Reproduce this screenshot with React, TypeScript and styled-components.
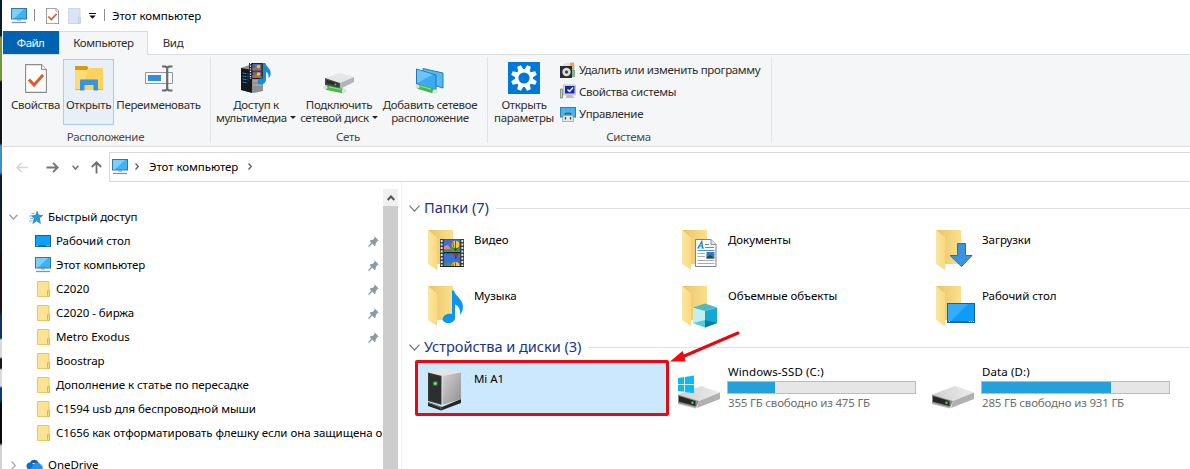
import React from 'react';
import styled, { createGlobalStyle } from 'styled-components';

const Global = createGlobalStyle`
  * { box-sizing: border-box; }
  body { margin: 0; background: #fff; overflow: hidden; }
  svg { display: block; flex: none; }
`;

/* ---------- frame ---------- */
const Screen = styled.div`
  display: flex;
  width: 1190px;
  height: 469px;
  overflow: hidden;
  font: 11.5px/16px "Noto Sans", "Open Sans", sans-serif;
  letter-spacing: -0.06px;
  color: #000;
  white-space: nowrap;
`;
const DesktopEdge = styled.div`
  flex: none;
  width: 2px;
  background: linear-gradient(#0b1a33 0 36px, #6f9a3a 37px 80px, #101418 82px 143px, #3f8fc0 146px 172px,
    #0c1a35 176px 250px, #1a1216 256px 310px, #12335e 316px 338px, #d8dade 340px 357px, #15151a 359px 368px,
    #d8dade 370px 386px, #0f3a6e 388px 400px, #07090c 404px 443px, #d2d4d6 446px);
`;
const Window = styled.div`
  position: relative;
  flex: 1;
  min-width: 0;
  display: flex;
  flex-direction: column;
  background: #fff;
  padding-left: 1px;
`;

/* ---------- title bar ---------- */
const TitleBar = styled.header`
  display: flex;
  align-items: center;
  height: 31px;
  padding-left: 8px;
`;
const TitleDivider = styled.i<{ $l: number; $r: number }>`
  width: 1px;
  height: 12px;
  margin: 0 ${p => p.$r}px 2px ${p => p.$l}px;
  background: #8c8c8c;
`;
const QuickIcon = styled.span<{ $r: number }>`
  margin-right: ${p => p.$r}px;
`;
const Title = styled.span`
  padding-top: 1px;
`;

/* ---------- tabs ---------- */
const Tabs = styled.nav`
  display: flex;
  height: 24px;
  letter-spacing: -0.33px;
  border-bottom: 1px solid #dadbdc;
`;
const FileTab = styled.div`
  width: 56px;
  height: 23px;
  padding-right: 1px;
  line-height: 24px;
  text-align: center;
  letter-spacing: -0.6px;
  color: #fff;
  background: #0063b1;
`;
const ActiveTab = styled.div`
  width: 89px;
  height: 24px;
  line-height: 22px;
  text-align: center;
  color: #2b2b2b;
  background: #f5f6f7;
  border: solid #dadbdc;
  border-width: 1px 1px 0;
`;
const Tab = styled.div`
  width: 50px;
  line-height: 24px;
  text-align: center;
  color: #2b2b2b;
`;

/* ---------- ribbon ---------- */
const Ribbon = styled.section`
  display: flex;
  height: 92px;
  background: #f5f6f7;
  border-bottom: 1px solid #dadbdc;
  color: #2f2f2f;
  letter-spacing: -0.33px;
`;
const Group = styled.div<{ $w: number }>`
  display: flex;
  flex-direction: column;
  width: ${p => p.$w}px;
  height: 86px;
  margin-top: 2px;
  border-right: 1px solid #e2e3e4;
`;
const GroupBody = styled.div<{ $pad: number }>`
  display: flex;
  flex: none;
  height: 71px;
  padding: 2px 0 0 ${p => p.$pad}px;
`;
const GroupLabel = styled.div`
  padding-right: 2px;
  line-height: 18px;
  text-align: center;
  color: #4a4a4a;
`;
const BigButton = styled.button<{ $w: number; $hot?: boolean; $gap?: number }>`
  display: flex;
  flex-direction: column;
  align-items: center;
  width: ${p => p.$w}px;
  height: 66px;
  margin: 0 0 0 ${p => p.$gap || 0}px;
  padding: 2px 0 0;
  font: inherit;
  line-height: 13px;
  letter-spacing: inherit;
  color: inherit;
  border: 1px solid ${p => (p.$hot ? '#a6cbee' : 'transparent')};
  background: ${p => (p.$hot ? '#e8eff7' : 'transparent')};
`;
const IconBox = styled.span`
  display: grid;
  place-items: center;
  height: 32px;
`;
const ButtonText = styled.span`
  margin-top: 4px;
  text-align: center;
`;
const Caret = styled.i`
  display: inline-block;
  margin: 0 0 3px 3px;
  border: solid transparent;
  border-width: 3px 3px 0;
  border-top-color: #222;
`;
const SmallList = styled.div`
  display: flex;
  flex-direction: column;
  margin-left: 4px;
`;
const SmallItem = styled.div`
  display: flex;
  align-items: center;
  gap: 3px;
  height: 22px;
`;

/* ---------- address row ---------- */
const NavRow = styled.div`
  display: flex;
  align-items: center;
  height: 35px;
  padding-left: 13px;
`;
const NavIcon = styled.span<{ $r: number }>`
  margin: 5px ${p => p.$r}px 0 0;
`;
const Address = styled.div`
  display: flex;
  align-items: center;
  flex: 1;
  height: 30px;
  margin-top: 4px;
  padding-left: 2px;
  border: 1px solid #d9d9d9;
  border-right: 0;
`;
const Crumb = styled.span`
  margin: 0 10px 0 7px;
`;
const CrumbText = styled.span`
  margin-right: 3px;
`;

/* ---------- body ---------- */
const Body = styled.div`
  display: flex;
  flex: 1;
  min-height: 0;
`;
const Sidebar = styled.aside`
  width: 380px;
  padding-top: 23px;
  overflow: hidden;
`;
const TreeRow = styled.div`
  display: flex;
  align-items: center;
  height: 24px;
  padding: 0 4px 0 32px;
  gap: 5px;
`;
const QuickHead = styled(TreeRow)`
  padding-left: 6px;
  gap: 11px;
`;
const CloudHead = styled(TreeRow)`
  margin-top: 8px;
  padding-left: 8px;
`;
const TreeLabel = styled.span`
  flex: 1;
`;
const HeadLabel = styled(TreeLabel)`
  margin-left: -6px;
`;
const CloudSlot = styled.span`
  margin-left: 5px;
`;
const Scroll = styled.div`
  display: flex;
  flex-direction: column;
  width: 15px;
  margin-top: 7px;
  background: #cdcdcd;
`;
const ScrollUp = styled.div`
  display: grid;
  place-items: center;
  height: 17px;
  background: #f0f0f0;
`;
const Main = styled.main`
  flex: 1;
  min-width: 0;
  margin-left: 3px;
  border-left: 1px solid #f0f0f0;
  padding: 14px 0 0 7px;
`;
const SectionHead = styled.div`
  display: flex;
  align-items: center;
  height: 24px;
  font-size: 14.6px;
  letter-spacing: -0.05px;
  color: #1e3287;
`;
const SectionTitle = styled.span`
  margin: -2px 7px 0 4px;
`;
const Rule = styled.i`
  flex: 1;
  height: 1px;
  background: #e0e0e0;
`;
const Tiles = styled.div`
  display: grid;
  grid-template-columns: repeat(3, 254px);
  grid-auto-rows: 56px;
  padding-left: 7px;
`;
const FolderGrid = styled(Tiles)`
  height: 115px;
  padding-top: 2px;
`;
const DriveGrid = styled(Tiles)`
  padding-top: 2px;
`;
const Tile = styled.div`
  display: flex;
  padding: 7px 0 0 11px;
`;
const TileLabel = styled.span`
  margin: 3px 0 0 6px;
`;
const Selected = styled.div`
  display: flex;
  width: 254px;
  height: 56px;
  margin: -1px 0 0 -1px;
  padding: 4px 0 0 9px;
  border: 3px solid #e30b13;
  border-radius: 2px;
  background: #cce8ff;
`;
const SelectedLabel = styled.span`
  margin: 4px 0 0 7px;
`;
const Drive = styled.div`
  display: flex;
  padding: 3px 0 0 7px;
`;
const DriveInfo = styled.div`
  width: 189px;
  margin-left: 4px;
  line-height: 15px;
`;
const DriveName = styled.div`
  padding-left: 1px;
  letter-spacing: 0.1px;
`;
const Meter = styled.div`
  height: 13px;
  margin: 2px 0 1px;
  border: 1px solid #bcbcbc;
  background: #e6e6e6;
`;
const MeterFill = styled.div<{ $pct: number }>`
  width: ${p => p.$pct}%;
  height: 100%;
  background: #26a0da;
`;
const DriveFree = styled.div`
  padding-left: 1px;
  color: #6d6d6d;
  letter-spacing: -0.18px;
`;
const Pointer = styled.svg`
  position: absolute;
  left: 666px;
  top: 328px;
`;

/* ---------- icons ---------- */
const PcIcon = () => (
  <svg width="16" height="16" viewBox="0 0 16 16">
    <rect x=".5" y=".5" width="15" height="10.5" fill="#3db3f5" stroke="#3177a0" />
    <path d="M1 1h12L3 10.500H1z" fill="#7dcffb" />
    <path d="M6 12h4" stroke="#5c9ab8" />
    <path d="M1 14.500h14" stroke="#7e93a5" strokeWidth="1.300" />
  </svg>
);
const CheckDoc = ({ big }: { big?: boolean }) => (
  <svg width={big ? 22 : 13} height={big ? 29 : 16} viewBox="0 0 22 29" preserveAspectRatio="none">
    <path d="M.6.600h16l4.800 5v22.800H.6z" fill="#fff" stroke="#8b8b8b" strokeWidth={big ? 1.1 : 1.7} />
    <path d="M16.500.600v5h5" fill="#eee" stroke="#8b8b8b" />
    <path d="M4 15.500l5 5.500 9-10" fill="none" stroke="#e0592a" strokeWidth="3" />
  </svg>
);
const BlankDoc = () => (
  <svg width="13" height="16" viewBox="0 0 13 16">
    <path d="M.5.500h11.500v15H.5z" fill="#dbe4f4" stroke="#ccd8ea" />
    <path d="M10.500 9.500h2v6h-2z" fill="#d3def0" stroke="#c3d0e6" />
  </svg>
);
const Overflow = () => (
  <svg width="7" height="6" viewBox="0 0 7 6">
    <path d="M0 .500h7" stroke="#111" />
    <path d="M.3 2.500h6.400L3.500 5.800z" fill="#111" />
  </svg>
);
const OpenFolder = () => (
  <svg width="28" height="25" viewBox="0 0 28 25">
    <path d="M0 24V3.500h13l2-1.500h13v22z" fill="#fbd45f" />
    <path d="M0 4h12L8 24H0z" fill="#fde08a" opacity=".6" />
    <path d="M0 4V0h12l1.500 2-1.500 2z" fill="#d69c0c" />
    <path d="M5 24.500V15q0-2 2-2h14q2 0 2 2v9.500h-4.500V19h-9v5.500z" fill="#3a94dc" />
    <path d="M6 13.500h16" stroke="#69b5ee" />
    <path d="M0 23.500h5M23 23.500h5" stroke="#e3b341" />
  </svg>
);
const RenameIcon = () => (
  <svg width="28" height="27" viewBox="0 0 28 27">
    <path d="M.5 7.500h27v11H.5z" fill="#f7f8f9" stroke="#8f979d" />
    <rect x="3" y="10" width="13" height="6" fill="#2f8edb" />
    <path d="M17 1.500h3.500l1.700 1.200L24 1.500h3.500M17 25.500h3.500l1.700-1.200 1.800 1.200h3.500M22.200 2v23" fill="none" stroke="#6b6b6b" strokeWidth="2.200" />
  </svg>
);
const MediaIcon = () => (
  <svg width="32" height="32" viewBox="0 0 32 32">
    <path d="M1 6l11-4 11 5v22l-9 2L1 28z" fill="#8c9094" />
    <path d="M1 6l11 2v23L1 28z" fill="#15181d" />
    <path d="M2.500 11l6 1M2.500 14l6 1M2.500 17l6 1M2.500 20l5 1" stroke="#1d7fd0" strokeDasharray="4 1" />
    <path d="M13 19h9M13 23h9" stroke="#b4b8ba" />
    <rect x="9" y="1" width="16" height="16" fill="#222" />
    <path d="M10.500 1v16M23.500 1v16" stroke="#f2f2f2" strokeWidth="1.300" strokeDasharray="1.300 1.300" />
    <path d="M12.500 2h9v6.500h-9zM12.500 9.500h9V16h-9z" fill="#4668b5" />
    <path d="M12.500 6l4-1 5 2v1.500h-9zM12.500 13l4-1 5 2v2h-9z" fill="#b66546" />
    <circle cx="18.500" cy="4.500" r="1.800" fill="#efc331" /><circle cx="18.500" cy="12" r="1.800" fill="#efc331" />
    <path d="M23 1h2.500c.5 4 6.500 6 5 12-.6 1.500-1.300 2.500-2 3 .5-4-1-5.500-2.500-6v7.500c0 3-2.500 5-5.500 5s-4.500-4.500 0-6q1.500-.5 2.500 0z" fill="#138fe0" />
  </svg>
);
const NetDrive = () => (
  <svg width="32" height="32" viewBox="0 0 32 32">
    <path d="M2 16l15-5 14 4-14 6z" fill="#e6e6e6" />
    <path d="M2 16l15 5v6L2 23z" fill="#4a4a4a" />
    <path d="M3.500 18l11.500 3.500v3L3.500 21z" fill="#2b2b2b" />
    <path d="M17 21l14-6v5l-14 7z" fill="#b5b5b5" />
    <path d="M3 25.500l17 3.500" stroke="#45b84c" strokeWidth="4.500" />
    <path d="M6 25l12 2.500" stroke="#8be08c" strokeWidth="1.200" />
    <circle cx="2.500" cy="25.500" r="2" fill="#d9dfd9" /><circle cx="21" cy="29" r="2.300" fill="#dce0dc" />
    <circle cx="12.500" cy="22.500" r="1" fill="#3fe04e" />
  </svg>
);
const NetPlace = () => (
  <svg width="32" height="32" viewBox="0 0 32 32">
    <path d="M9 6.500l20 4.500v15L9 20z" fill="#57b9f3" stroke="#247fb7" />
    <path d="M2.500 7l19.500 6v15L2.500 22z" fill="#3caaf0" stroke="#1f78b2" />
    <path d="M3 7.500l16 5L3 21z" fill="#7bcbfa" opacity=".8" />
    <path d="M4 24.500l15 4.500" stroke="#45b84c" strokeWidth="4.500" />
    <path d="M6 24l11 3.200" stroke="#8be08c" strokeWidth="1.200" />
    <circle cx="3.500" cy="24.500" r="2" fill="#d9dfd9" /><circle cx="21" cy="29.500" r="2.300" fill="#dce0dc" />
  </svg>
);
const GearIcon = () => (
  <svg width="32" height="32" viewBox="0 0 32 32">
    <rect width="32" height="32" fill="#0078d7" />
    <g fill="#fff">
      {[0, 45, 90, 135, 180, 225, 270, 315].map(a => (
        <path key={a} d="M13.200 8l.8-5h4l.8 5z" transform={`rotate(${a + 22.5} 16 16)`} />
      ))}
    </g>
    <circle cx="16" cy="16" r="7.300" fill="none" stroke="#fff" strokeWidth="3.400" />
  </svg>
);
const UninstallIcon = () => (
  <svg width="16" height="16" viewBox="0 0 16 16">
    <path d="M3 2l10-2 2 2v13H3z" fill="#dfe3dc" />
    <path d="M10 1l4-.5V8h-4z" fill="#e8a26a" />
    <path d="M11 8h4v7h-4z" fill="#7fb494" />
    <rect x="0" y="4" width="12" height="12" fill="#2c2c2c" />
    <circle cx="6.500" cy="10" r="4.200" fill="#d9dcdd" /><circle cx="6.500" cy="10" r="1.500" fill="#333" />
  </svg>
);
const SystemIcon = () => (
  <svg width="16" height="16" viewBox="0 0 16 16">
    <path d="M.5 5h2v9h-2z" fill="#c5cdc3" stroke="#6f8a6b" strokeWidth=".8" />
    <rect x="3.500" y="1" width="12" height="10" fill="#dcdad6" stroke="#aaa" strokeWidth=".6" />
    <rect x="5" y="2" width="9.500" height="7.500" fill="#1428b4" />
    <path d="M7.500 5.500l2 2 3.500-4" fill="none" stroke="#fff" strokeWidth="1.400" />
    <path d="M7 11h5l2.500 3h-9z" fill="#bdbdbd" />
  </svg>
);
const ManageIcon = () => (
  <svg width="16" height="16" viewBox="0 0 16 16">
    <rect x=".5" y="1.500" width="15" height="9.500" fill="#46b4ef" stroke="#2f7eab" />
    <path d="M5.500 9V7.500h5V9" fill="none" stroke="#555" strokeWidth="1.300" />
    <path d="M3 9.500h10l.5 6h-11z" fill="#e8e8e6" stroke="#8a8a8a" strokeWidth=".6" />
    <path d="M5.500 11v2.500M10.500 11v2.500" stroke="#444" strokeWidth="1.300" />
  </svg>
);
const Arrow = ({ c, up }: { c: string; up?: boolean }) => (
  <svg width="13" height="13" viewBox="0 0 13 13">
    <g fill="none" stroke={c} strokeWidth="1.800" transform={up ? 'rotate(-90 6.500 6.500)' : undefined}>
      <path d="M.5 6.500h11M7 1.800l4.700 4.700L7 11.200" />
    </g>
  </svg>
);
const BackArrow = () => (
  <svg width="13" height="13" viewBox="0 0 13 13">
    <path d="M12 6.500H1M5.800 1.800L1.100 6.500l4.700 4.700" fill="none" stroke="#d5d5d5" strokeWidth="1.500" />
  </svg>
);
const Chevron = ({ w, h, c, sw = 1.3 }: { w: number; h: number; c: string; sw?: number }) => (
  <svg width={w} height={h} viewBox={`0 0 ${w} ${h}`}>
    <path d={`M.5 .7L${w / 2} ${h - 0.9}L${w - 0.5} .7`} fill="none" stroke={c} strokeWidth={sw} />
  </svg>
);
const RightChevron = ({ c, h = 7, w = 4 }: { c: string; h?: number; w?: number }) => (
  <svg width={w} height={h} viewBox={`0 0 ${w} ${h}`}>
    <path d={`M.5 .5L${w - 0.7} ${h / 2}L.5 ${h - 0.5}`} fill="none" stroke={c} strokeWidth="1.500" />
  </svg>
);
const StarIcon = () => (
  <svg width="14" height="13" viewBox="0 0 14 13">
    <path d="M8.200.300l1.300 3.900 4.200.2-3.300 2.700 1 5.300-3.600-2.600-4 2.700 1.500-4.800-2.600-3 3.900-.3z" fill="#239be2" stroke="#1a6ca8" strokeWidth=".6" />
    <path d="M2.500 2.500h3M0 5h3M1 7.500h3M0 10h3.500" stroke="#5bb6ea" strokeWidth=".9" />
  </svg>
);
const DesktopIcon = () => (
  <svg width="16" height="16" viewBox="0 0 16 16">
    <rect x=".5" y="2.500" width="15" height="11" fill="#10a0fb" stroke="#17648f" />
    <path d="M1 12.700h14" stroke="#0a6fb5" />
    <path d="M1.500 12.700h1M11.500 12.700h1M13.500 12.700h1" stroke="#fff" />
  </svg>
);
const SmallFolder = () => (
  <svg width="16" height="16" viewBox="0 0 16 16">
    <path d="M2.500.500h11.500v15H2.500z" fill="#ffe394" stroke="#e8c766" />
    <path d="M12.500 9.500h2v6h-2z" fill="#fbd774" stroke="#dfb54d" />
  </svg>
);
const PinIcon = () => (
  <svg width="11" height="11" viewBox="0 0 11 11">
    <path d="M6.500.300L10.700 4.500l-1.200.6L7.800 6.900l-.3 2.600-1 .5L1.700 5.200l.8-.9 2.400-.5 1.500-1.600z" fill="#8d99a2" />
    <path d="M4 7L.5 10.500" stroke="#8d99a2" strokeWidth="1.200" />
  </svg>
);
const CloudIcon = () => (
  <svg width="17" height="12" viewBox="0 0 17 12">
    <path d="M4 4C5 0 11-.5 12.500 4z" fill="#0f5fb4" />
    <path d="M1 9C-1 5 3 2 6.500 4.500L14 11H3z" fill="#0a6fc8" />
    <path d="M7 6c3-4 8-2 8 0 2.500 1 2.500 5-1 6H3z" fill="#2493e4" />
  </svg>
);

const FolderBase = ({ children }: { children: React.ReactNode }) => (
  <svg width="41" height="43" viewBox="0 0 41 43">
    <defs>
      <linearGradient id="back" x1="0" x2="1"><stop offset="0" stopColor="#e8c468" /><stop offset="1" stopColor="#fbe08b" /></linearGradient>
      <linearGradient id="front" x1="0" x2="1"><stop offset="0" stopColor="#fbe6a0" /><stop offset="1" stopColor="#f9da80" /></linearGradient>
    </defs>
    <path d="M1 1h25v34H6z" fill="url(#back)" />
    <path d="M1 1l9 7.500V41L1 35z" fill="url(#front)" />
    {children}
  </svg>
);
const Balloon = ({ x, y }: { x: number; y: number }) => (
  <g>
    <circle cx={x} cy={y} r="3.800" fill="#f4cf32" />
    <path d={`M${x} ${y - 3.8}v7.500M${x - 2.5} ${y - 2.5}q-.5 3 1 5.500`} stroke="#b03022" fill="none" />
    <path d={`M${x - 1.5} ${y + 4}h3l-1 2h-1z`} fill="#3a2a22" />
  </g>
);
const VideoArt = () => (
  <g>
    <path d="M13 10h24v28H13z" fill="#3c3f42" />
    <path d="M14.700 11v27M35.300 11v27" stroke="#e9edf0" strokeWidth="1.800" strokeDasharray="2 1.500" />
    <path d="M17 10.500h16v12.500H17zM17 24.500h16V37H17z" fill="#3c6fd0" />
    <path d="M17 19l5-1 11 2v3H17z" fill="#3f9a4d" /><path d="M17 17l4-1 3 4h-7z" fill="#d8889a" />
    <path d="M17 34.500l6-1 10 2V37H17z" fill="#3f9a4d" />
    <Balloon x={28.500} y={15.500} />
    <path d="M24.500 37a4 4 0 0 1 8 0z" fill="#f4cf32" />
    <path d="M28.500 33.500V37M26 34.500V37" stroke="#b03022" />
    <path d="M26 24.500h5.500l-2 3h-1.500z" fill="#a32c2c" />
    <path d="M28 27.500h1.500v2H28z" fill="#3a2a22" />
    <path d="M17 23.500h16M13 37.500h24" stroke="#222" />
  </g>
);
const MusicArt = () => (
  <path d="M25 5.500h2c1 6 9 8 9 16.500 0 3-1.500 6-3 8 .8-5-1-9-5-10.500V33c0 3-3.500 5.500-7.500 5-5-.3-6.500-4.500-3-7.500 2-1.600 5-2 7.500-1.300z" fill="#0b96ee" />
);
const DocArt = () => (
  <g>
    <path d="M14.500 10.500H30l5 5v22H14.500z" fill="#fafbfb" stroke="#7d8388" />
    <path d="M30 10.500v5h5" fill="#e5e8ea" stroke="#8a9095" />
    <path d="M17 19l3.800-6.500.8 6.500M18.500 17h3M16.500 19h2M20.500 19h2.500" fill="none" stroke="#1976c0" strokeWidth="1.100" />
    <path d="M24 15.500h4M24 18.500h9M16.500 21.500h17" stroke="#4a97cf" />
    <path d="M16.500 24.500H24M16.500 27.500H24M16.500 31.500h17M16.500 34.500h17" stroke="#a6adb2" />
    <rect x="25.500" y="23" width="8" height="6.500" fill="#3c78b8" /><path d="M25.500 28l4-2 4 3.500h-8z" fill="#294a3c" />
  </g>
);
const CubeArt = () => (
  <g>
    <path d="M12 22.500l12 3.500v16.500L12 38z" fill="#c3eef1" />
    <path d="M36 22.500L24 26v16.500L36 38z" fill="#12a9d8" />
    <path d="M12 22.500l12-4 12 4L24 26z" fill="#4dbac6" />
    <path d="M24 35l12 3-12 4.500z" fill="#0d7f92" />
    <path d="M12 38l12-3v7.500z" fill="#55cdd8" />
  </g>
);
const DownArt = () => (
  <path d="M22.500 14.500h8v12h6.500L26.500 37.500 15 26.500h7.500z" fill="#3a93e2" stroke="#2c6ea6" />
);
const DeskArt = () => (
  <g>
    <rect x="12.500" y="18.500" width="27" height="19" fill="#0e9bfa" stroke="#17648f" />
    <path d="M13 19h20L16 36h-3z" fill="#33adfb" />
    <path d="M13 36.500h26" stroke="#0e77bd" />
    <path d="M14 36.500h1M34 36.500h1M36 36.500h1M38 36.500h1" stroke="#e8f6ff" />
  </g>
);
const TowerIcon = () => (
  <svg width="40" height="44" viewBox="0 0 40 44">
    <defs>
      <linearGradient id="side" x1="0" x2="1" y1="0" y2="1"><stop offset="0" stopColor="#d4d4d4" /><stop offset="1" stopColor="#8f8f8f" /></linearGradient>
    </defs>
    <path d="M1 35l14 5 19-8v4l-20 7.500L1 39z" fill="#262626" />
    <path d="M1 35.500l13 5v2" fill="none" stroke="#777" />
    <path d="M1 5.500L20 1l14 4.500L15 10z" fill="#e4e4e4" />
    <path d="M1 5.500L15 9v29L1 34z" fill="#3b3b3b" />
    <path d="M2 7l12 3v26.500L2 33z" fill="#2c2f2e" />
    <path d="M15 9l19-3.500V32L15 38z" fill="url(#side)" />
    <path d="M15 9v29" stroke="#e8e8e8" />
    <circle cx="8.300" cy="16.500" r="2.800" fill="#2f6b36" /><circle cx="8.300" cy="16.500" r="1.500" fill="#5cf06a" />
  </svg>
);
const DriveIcon = ({ win }: { win?: boolean }) => (
  <svg width="46" height="48" viewBox="0 0 46 48">
    <defs>
      <linearGradient id="lid" x1="0" x2="1"><stop offset="0" stopColor="#cfcfcf" /><stop offset="1" stopColor="#ececec" /></linearGradient>
    </defs>
    <path d="M1 30.500L24 22l19 6.500L22 37z" fill="url(#lid)" />
    <path d="M22 37l21-8.500V35L20 44z" fill="#b1b1b3" />
    <path d="M1 30.500L22 37l-3 7L1 39.500z" fill="#8d8d8d" />
    <path d="M2 32l16.500 5v5L2 37.800z" fill="#262827" />
    <path d="M1 39.500l18 4.500" stroke="#bbb" />
    <circle cx="15.500" cy="38.800" r="1.300" fill="#3ed84c" />
    {win && (
      <g fill="#0fb9ee">
        <path d="M1 14l6.200-1v7H1zM8 12.900L17 11.500V20H8zM1 20.800h6.200v7L1 26.900zM8 20.800h9v8.400L8 28z" />
      </g>
    )}
  </svg>
);

/* ---------- data ---------- */
const quick: { label: string; icon: React.ReactNode; pin?: boolean }[] = [
  { label: 'Рабочий стол', icon: <DesktopIcon />, pin: true },
  { label: 'Этот компьютер', icon: <PcIcon />, pin: true },
  { label: 'C2020', icon: <SmallFolder />, pin: true },
  { label: 'C2020 - биржа', icon: <SmallFolder />, pin: true },
  { label: 'Metro Exodus', icon: <SmallFolder />, pin: true },
  { label: 'Boostrap', icon: <SmallFolder /> },
  { label: 'Дополнение к статье по пересадке', icon: <SmallFolder /> },
  { label: 'C1594 usb для беспроводной мыши', icon: <SmallFolder /> },
  { label: 'C1656 как отформатировать флешку если она защищена о', icon: <SmallFolder /> },
];
const folders = [
  { label: 'Видео', art: <VideoArt /> },
  { label: 'Документы', art: <DocArt /> },
  { label: 'Загрузки', art: <DownArt /> },
  { label: 'Музыка', art: <MusicArt /> },
  { label: 'Объемные объекты', art: <CubeArt /> },
  { label: 'Рабочий стол', art: <DeskArt /> },
];
const drives = [
  { name: 'Windows-SSD (C:)', free: '355 ГБ свободно из 475 ГБ', used: 25.3, win: true },
  { name: 'Data (D:)', free: '285 ГБ свободно из 931 ГБ', used: 69, win: false },
];

export default function App() {
  return (
    <Screen>
      <Global />
      <DesktopEdge />
      <Window>
        <TitleBar>
          <QuickIcon $r={0}><PcIcon /></QuickIcon>
          <TitleDivider $l={7} $r={11} />
          <QuickIcon $r={9}><CheckDoc /></QuickIcon>
          <QuickIcon $r={8}><BlankDoc /></QuickIcon>
          <QuickIcon $r={0}><Overflow /></QuickIcon>
          <TitleDivider $l={8} $r={7} />
          <Title>Этот компьютер</Title>
        </TitleBar>
        <Tabs>
          <FileTab>Файл</FileTab>
          <ActiveTab>Компьютер</ActiveTab>
          <Tab>Вид</Tab>
        </Tabs>
        <Ribbon>
          <Group $w={208}>
            <GroupBody $pad={8}>
              <BigButton $w={49}><IconBox><CheckDoc big /></IconBox><ButtonText>Свойства</ButtonText></BigButton>
              <BigButton $w={51} $gap={3} $hot><IconBox><OpenFolder /></IconBox><ButtonText>Открыть</ButtonText></BigButton>
              <BigButton $w={89}><IconBox><RenameIcon /></IconBox><ButtonText>Переименовать</ButtonText></BigButton>
            </GroupBody>
            <GroupLabel>Расположение</GroupLabel>
          </Group>
          <Group $w={277}>
            <GroupBody $pad={4}>
              <BigButton $w={82}><IconBox><MediaIcon /></IconBox><ButtonText>Доступ к<br />мультимедиа<Caret /></ButtonText></BigButton>
              <BigButton $w={80} $gap={2}><IconBox><NetDrive /></IconBox><ButtonText>Подключить<br />сетевой диск<Caret /></ButtonText></BigButton>
              <BigButton $w={102}><IconBox><NetPlace /></IconBox><ButtonText>Добавить сетевое<br />расположение</ButtonText></BigButton>
            </GroupBody>
            <GroupLabel>Сеть</GroupLabel>
          </Group>
          <Group $w={284}>
            <GroupBody $pad={4}>
              <BigButton $w={64}><IconBox><GearIcon /></IconBox><ButtonText>Открыть<br />параметры</ButtonText></BigButton>
              <SmallList>
                <SmallItem><UninstallIcon />Удалить или изменить программу</SmallItem>
                <SmallItem><SystemIcon />Свойства системы</SmallItem>
                <SmallItem><ManageIcon />Управление</SmallItem>
              </SmallList>
            </GroupBody>
            <GroupLabel>Система</GroupLabel>
          </Group>
        </Ribbon>
        <NavRow>
          <NavIcon $r={17}><BackArrow /></NavIcon>
          <NavIcon $r={13}><Arrow c="#757575" /></NavIcon>
          <NavIcon $r={11}><Chevron w={7} h={5} c="#777" sw={1.6} /></NavIcon>
          <NavIcon $r={6}><Arrow c="#6e6e6e" up /></NavIcon>
          <Address>
            <PcIcon />
            <Crumb><RightChevron c="#666" /></Crumb>
            <CrumbText>Этот компьютер</CrumbText>
            <Crumb><RightChevron c="#666" /></Crumb>
          </Address>
        </NavRow>
        <Body>
          <Sidebar>
            <QuickHead>
              <Chevron w={9} h={6} c="#a6a6a6" sw={1.5} />
              <StarIcon />
              <HeadLabel>Быстрый доступ</HeadLabel>
            </QuickHead>
            {quick.map(q => (
              <TreeRow key={q.label}>
                {q.icon}
                <TreeLabel>{q.label}</TreeLabel>
                {q.pin && <PinIcon />}
              </TreeRow>
            ))}
            <CloudHead>
              <RightChevron c="#b0b0b0" w={5} h={9} />
              <CloudSlot><CloudIcon /></CloudSlot>
              <TreeLabel>OneDrive</TreeLabel>
            </CloudHead>
          </Sidebar>
          <Scroll>
            <ScrollUp>
              <svg width="8" height="6" viewBox="0 0 8 6"><path d="M.7 5L4 1.500 7.300 5" fill="none" stroke="#505050" strokeWidth="1.900" /></svg>
            </ScrollUp>
          </Scroll>
          <Main>
            <SectionHead>
              <Chevron w={11} h={7} c="#6f6f6f" sw={1.1} />
              <SectionTitle>Папки (7)</SectionTitle>
              <Rule />
            </SectionHead>
            <FolderGrid>
              {folders.map(f => (
                <Tile key={f.label}>
                  <FolderBase>{f.art}</FolderBase>
                  <TileLabel>{f.label}</TileLabel>
                </Tile>
              ))}
            </FolderGrid>
            <SectionHead>
              <Chevron w={11} h={7} c="#6f6f6f" sw={1.1} />
              <SectionTitle>Устройства и диски (3)</SectionTitle>
              <Rule />
            </SectionHead>
            <DriveGrid>
              <Selected>
                <TowerIcon />
                <SelectedLabel>Mi A1</SelectedLabel>
              </Selected>
              {drives.map(d => (
                <Drive key={d.name}>
                  <DriveIcon win={d.win} />
                  <DriveInfo>
                    <DriveName>{d.name}</DriveName>
                    <Meter><MeterFill $pct={d.used} /></Meter>
                    <DriveFree>{d.free}</DriveFree>
                  </DriveInfo>
                </Drive>
              ))}
            </DriveGrid>
          </Main>
        </Body>
        <Pointer width="76" height="38" viewBox="0 0 76 38">
          <path d="M70 5L14 29" stroke="#e30b13" strokeWidth="3" strokeLinecap="round" />
          <path d="M2 33.500L14.500 23l2 5 .8 5.500z" fill="#f00a12" />
        </Pointer>
      </Window>
    </Screen>
  );
}
